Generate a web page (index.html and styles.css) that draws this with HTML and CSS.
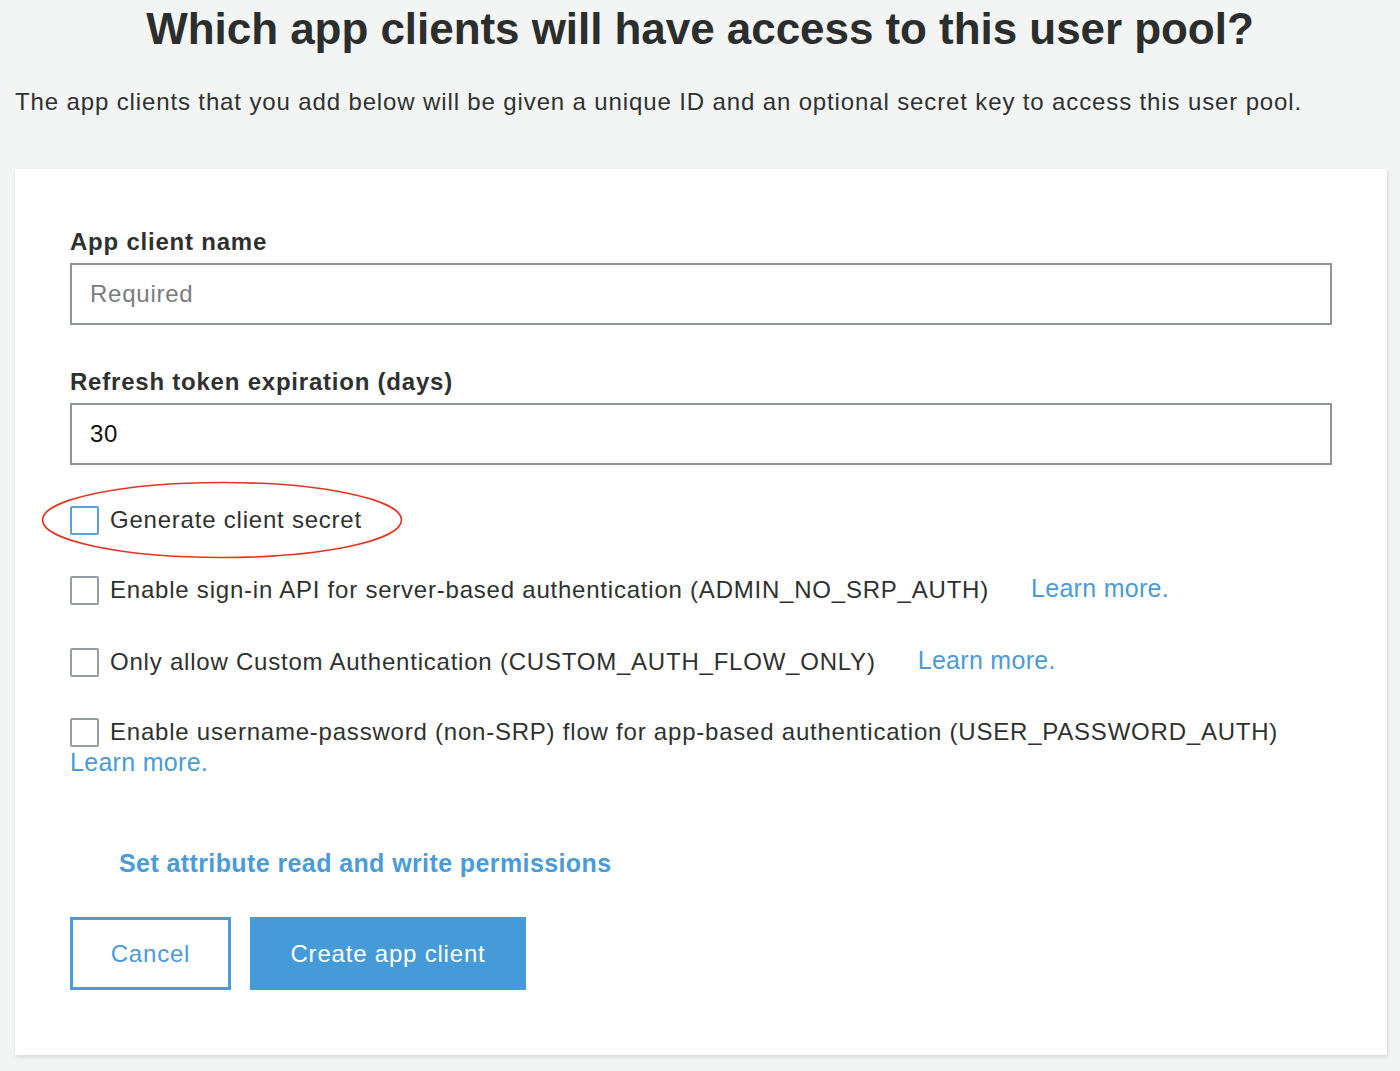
FILE: index.html
```html
<!DOCTYPE html>
<html lang="en">
<head>
<meta charset="utf-8">
<title>App clients</title>
<link rel="stylesheet" href="styles.css">
</head>
<body>
  <h1 class="title">Which app clients will have access to this user pool?</h1>
  <p class="subtitle">The app clients that you add below will be given a unique ID and an optional secret key to access this user pool.</p>

  <div class="card">
    <label class="field-label">App client name</label>
    <div class="input placeholder">Required</div>

    <label class="field-label second">Refresh token expiration (days)</label>
    <div class="input">30</div>

    <div class="check-row first">
      <span class="box box-active"></span>
      <span class="check-text">Generate client secret</span>
      <svg class="highlight" width="364" height="80" viewBox="0 0 364 80" aria-hidden="true">
        <ellipse cx="181" cy="39" rx="179.5" ry="37.5" fill="none" stroke="#e5341f" stroke-width="1.6"/>
      </svg>
    </div>

    <div class="check-row">
      <span class="box"></span>
      <span class="check-text">Enable sign-in API for server-based authentication (ADMIN_NO_SRP_AUTH)</span>
      <a class="learn" href="#">Learn more.</a>
    </div>

    <div class="check-row third">
      <span class="box"></span>
      <span class="check-text">Only allow Custom Authentication (CUSTOM_AUTH_FLOW_ONLY)</span>
      <a class="learn" href="#">Learn more.</a>
    </div>

    <div class="check-row">
      <span class="box"></span>
      <span class="check-text">Enable username-password (non-SRP) flow for app-based authentication (USER_PASSWORD_AUTH)</span>
    </div>
    <a class="learn learn-block" href="#">Learn more.</a>

    <a class="permissions" href="#">Set attribute read and write permissions</a>

    <div class="actions">
      <button class="btn btn-secondary" type="button">Cancel</button>
      <button class="btn btn-primary" type="button">Create app client</button>
    </div>
  </div>
</body>
</html>
```

FILE: styles.css
```css
html, body {
  margin: 0;
  padding: 0;
}

body {
  background: #f3f5f4;
  font-family: "Liberation Sans", Arial, Helvetica, sans-serif;
  color: #333535;
  width: 1400px;
  height: 1071px;
  overflow: hidden;
}

.title {
  margin: 0;
  padding-top: 5px;
  font-size: 44px;
  line-height: 48px;
  font-weight: 700;
  letter-spacing: -0.05px;
  text-align: center;
  color: #2c2e2e;
}

.subtitle {
  margin: 35px 0 0 15px;
  font-size: 24px;
  line-height: 27px;
  letter-spacing: 0.87px;
  color: #2f3131;
}

.card {
  margin: 54px 13px 0 15px;
  background: #ffffff;
  box-shadow: 1px 2px 4px rgba(0, 0, 0, 0.12);
  padding: 59px 55px 65px 55px;
  display: flex;
  flex-direction: column;
  align-items: flex-start;
}

.field-label {
  display: block;
  font-size: 24px;
  line-height: 27px;
  font-weight: 700;
  letter-spacing: 0.78px;
  color: #2f3131;
}

.field-label.second {
  margin-top: 43px;
}

.input {
  margin-top: 8px;
  box-sizing: border-box;
  width: 100%;
  height: 62px;
  border: 2px solid #8f959a;
  padding: 0 18px;
  font-size: 24px;
  line-height: 58px;
  letter-spacing: 0.75px;
  color: #111111;
}

.input.placeholder {
  color: #7a7c7d;
}

.check-row {
  position: relative;
  display: flex;
  align-items: center;
  height: 28px;
  margin-top: 42px;
}

.check-row.first {
  margin-top: 41px;
}

.check-row.third {
  margin-top: 44px;
}

.box {
  box-sizing: border-box;
  width: 29px;
  height: 29px;
  border: 2px solid #979da1;
  border-radius: 2px;
  background: #ffffff;
  flex: none;
}

.box-active {
  border-color: #5aa0da;
}

.check-text {
  margin-left: 11px;
  font-size: 24px;
  line-height: 28px;
  letter-spacing: 0.78px;
  color: #2f3131;
  white-space: nowrap;
}

.learn {
  margin-left: 42px;
  font-size: 25px;
  line-height: 28px;
  letter-spacing: 0.3px;
  color: #4a9bd7;
  text-decoration: none;
  position: relative;
  top: -2px;
}

.learn-block {
  margin-left: 0;
  top: 0;
  margin-top: 2px;
}

.highlight {
  position: absolute;
  left: -29px;
  top: -25px;
  pointer-events: none;
}

.permissions {
  margin: 73px 0 0 49px;
  font-size: 25px;
  line-height: 28px;
  font-weight: 700;
  letter-spacing: 0.4px;
  color: #4a9bd7;
  text-decoration: none;
}

.actions {
  display: flex;
  gap: 19px;
  margin-top: 40px;
}

.btn {
  box-sizing: border-box;
  height: 73px;
  font-family: "Liberation Sans", Arial, Helvetica, sans-serif;
  font-size: 24px;
  letter-spacing: 0.8px;
  border-radius: 0;
  cursor: pointer;
}

.btn-secondary {
  width: 161px;
  background: #ffffff;
  border: 3px solid #4a9bd7;
  color: #4a9bd7;
}

.btn-primary {
  width: 276px;
  background: #459bd8;
  border: 1px solid #459bd8;
  color: #ffffff;
}
```
